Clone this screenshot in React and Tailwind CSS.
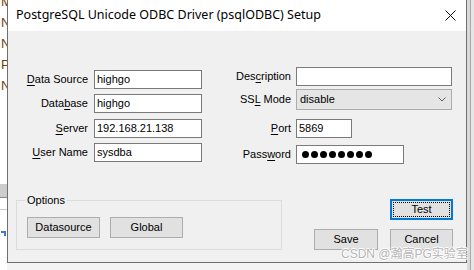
import React from "react";

const ui = { fontFamily: '"Liberation Sans", Arial, sans-serif' };

function Acc({ pre, u, post }) {
  return (
    <span>
      {pre}
      <span className="underline underline-offset-[2px] decoration-[1px]">{u}</span>
      {post}
    </span>
  );
}

function Label({ children, w }) {
  return (
    <div className={`${w} shrink-0 text-right text-[11px] leading-[13px] text-black`}>{children}</div>
  );
}

function Input({ value, w, h = "h-[19px]" }) {
  return (
    <div className={`${w} ${h} shrink-0 border border-[#7a7a7a] bg-white flex items-center pl-[2px] text-[11px] leading-[13px] text-black`}>
      {value}
    </div>
  );
}

function Btn({ children, w, focus }) {
  if (focus) {
    return (
      <div className={`${w} h-[21px] border-2 border-[#0078d7] bg-[#e1e1e1] p-[1px]`}>
        <div className="w-full h-full border border-dotted border-black flex items-center justify-center text-[11px] leading-[13px] text-black">
          {children}
        </div>
      </div>
    );
  }
  return (
    <div className={`${w} h-[21px] border border-[#adadad] bg-[#e1e1e1] flex items-center justify-center text-[11px] leading-[13px] text-black`}>
      {children}
    </div>
  );
}

export default function App() {
  return (
    <div className="relative w-[474px] h-[270px] overflow-hidden bg-[#f4f4f4] flex" style={ui}>
      {/* left background strip */}
      <div className="w-[7px] h-full shrink-0 bg-white flex flex-col overflow-hidden">
        <div className="mt-[-9px] flex flex-col text-[13px] leading-[21px] text-[#7a3b10] pl-[1px]">
          <span>M</span>
          <span>N</span>
          <span>N</span>
          <span>P</span>
          <span>N</span>
        </div>
        <div className="mt-[88px] h-[13px] bg-[#cccccc]" />
        <div className="h-[1px] bg-[#8a8a8a]" />
        <div className="mt-[11px] h-[1px] bg-[#c8c8c8]" />
        <div className="mt-[21px] h-[5px] w-[5px] ml-[1px] border-t-2 border-r-2 border-[#3a7bd5]" />
      </div>

      {/* dialog */}
      <div className="w-[460px] h-[263px] shrink-0 flex flex-col border-x border-b border-[#6f6f6f] bg-[#f0f0f0]">
        {/* title bar */}
        <div className="h-[31px] shrink-0 bg-white flex items-center justify-between pl-[8px] pr-[10px]">
          <span className="text-[12.5px] leading-[16px] text-black mt-[-2px]" style={{ fontFamily: '"Noto Sans", "Open Sans", sans-serif' }}>
            PostgreSQL Unicode ODBC Driver (psqlODBC) Setup
          </span>
          <svg width="11" height="11" viewBox="0 0 11 11" className="mt-[-1px]">
            <path d="M0.5 0.5 L10.5 10.5 M10.5 0.5 L0.5 10.5" stroke="#111" strokeWidth="1" />
          </svg>
        </div>

        {/* body */}
        <div className="flex-1 flex flex-col">
          <div className="flex">
            {/* left column */}
            <div className="w-[194px] shrink-0 flex flex-col pt-[39px]">
              <div className="flex items-center gap-[6px]">
                <Label w="w-[80px]"><Acc pre="" u="D" post="ata Source" /></Label>
                <Input w="w-[108px]" value="highgo" />
              </div>
              <div className="flex items-center gap-[6px] mt-[5px]">
                <Label w="w-[80px]"><Acc pre="Data" u="b" post="ase" /></Label>
                <Input w="w-[108px]" value="highgo" />
              </div>
              <div className="flex items-center gap-[6px] mt-[6px]">
                <Label w="w-[80px]"><Acc pre="" u="S" post="erver" /></Label>
                <Input w="w-[108px]" value="192.168.21.138" />
              </div>
              <div className="flex items-center gap-[6px] mt-[5px]">
                <Label w="w-[80px]"><Acc pre="" u="U" post="ser Name" /></Label>
                <Input w="w-[108px]" value="sysdba" />
              </div>
            </div>

            {/* right column */}
            <div className="flex flex-col pt-[36px]">
              <div className="flex items-center gap-[5px]">
                <Label w="w-[89px]"><Acc pre="Des" u="c" post="ription" /></Label>
                <Input w="w-[156px]" value="" />
              </div>
              <div className="flex items-center gap-[5px] mt-[3px]">
                <Label w="w-[89px]"><Acc pre="SS" u="L" post=" Mode" /></Label>
                <div className="w-[156px] h-[21px] shrink-0 border border-[#acacac] bg-[#e5e5e5] flex items-center justify-between pl-[3px] pr-[5px] text-[11px] leading-[13px] text-black">
                  <span>disable</span>
                  <svg width="8" height="5" viewBox="0 0 8 5">
                    <path d="M0.5 0.5 L4 4 L7.5 0.5" fill="none" stroke="#606060" strokeWidth="1" />
                  </svg>
                </div>
              </div>
              <div className="flex items-center gap-[5px] mt-[9px]">
                <Label w="w-[89px]"><Acc pre="" u="P" post="ort" /></Label>
                <Input w="w-[56px]" value="5869" />
              </div>
              <div className="flex items-center gap-[5px] mt-[7px]">
                <Label w="w-[89px]"><Acc pre="Pass" u="w" post="ord" /></Label>
                <div className="w-[108px] h-[19px] shrink-0 border border-[#7a7a7a] bg-white flex items-center gap-[2px] pl-[5px]">
                  {[0, 1, 2, 3, 4, 5, 6, 7].map((i) => (
                    <span key={i} className="w-[7px] h-[7px] rounded-full bg-black" />
                  ))}
                </div>
              </div>
            </div>
          </div>

          {/* bottom */}
          <div className="flex items-start mt-[31px]">
            <fieldset className="ml-[8px] w-[266px] border border-[#dcdcdc] pl-[10px] pt-[11px] pb-[11px]">
              <legend className="ml-[-2px] px-[2px] text-[11px] leading-[11px] text-black">Options</legend>
              <div className="flex gap-[10px]">
                <Btn w="w-[73px]">Datasource</Btn>
                <Btn w="w-[73px]">Global</Btn>
              </div>
            </fieldset>
            <div className="ml-[32px] w-[139px] flex flex-col items-end">
              <div className="mt-[4px]">
                <Btn w="w-[63px]" focus>Test</Btn>
              </div>
              <div className="flex gap-[12px] mt-[9px]">
                <Btn w="w-[64px]">Save</Btn>
                <Btn w="w-[63px]">Cancel</Btn>
              </div>
            </div>
          </div>
        </div>
      </div>

      {/* right background strip */}
      <div className="flex-1 h-full bg-[#dadada] flex">
        <div className="w-[3px] h-full" />
        <div className="w-[1px] h-full bg-[#a8a8a8]" />
        <div className="flex-1 h-full bg-[#e6e6e6]" />
      </div>

      {/* watermark */}
      <div
        className="absolute left-[341px] top-[247px] text-[12px] leading-[14px] text-[#b4b4b4] whitespace-nowrap"
        style={{
          fontFamily: '"Liberation Sans", "Noto Sans CJK SC", sans-serif',
          textShadow: "1px 0 0 #fff, -1px 0 0 #fff, 0 1px 0 #fff, 0 -1px 0 #fff",
        }}
      >
        CSDN @瀚高PG实验室
      </div>
    </div>
  );
}
